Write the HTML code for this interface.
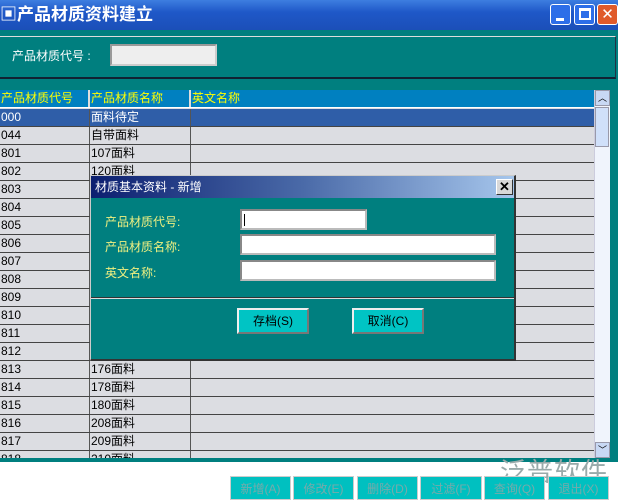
<!DOCTYPE html>
<html><head><meta charset="utf-8"><style>
*{margin:0;padding:0;box-sizing:border-box}
body{width:618px;height:500px;overflow:hidden;background:#fff;font-family:"Liberation Sans","Noto Sans CJK SC",sans-serif;font-size:12px;position:relative}
.abs{position:absolute}
.title{left:0;top:0;width:618px;height:30px;background:linear-gradient(#3d7ee0,#1f58c8 40%,#1b4fb8);color:#fff;font-size:17px;font-weight:bold;line-height:30px;padding-left:0}
.tb{top:4px;width:21px;height:21px;border:1px solid #fff;border-radius:3px;background:#2d6ee8}
.main{left:0;top:30px;width:618px;height:432px;background:#007f7f}
.grid{left:0;top:90px;width:594px;height:368px;background:#dcdde2;overflow:hidden}
.row{position:absolute;left:0;width:594px;height:18px;border-bottom:1px solid #444;font-size:12px;line-height:17px}
.c1,.c2,.c3{position:absolute;top:0;height:17px;padding-left:1px}
.c1{left:0;width:90px;border-right:1px solid #555}
.c2{left:90px;width:101px;border-right:1px solid #555}
.c3{left:191px;width:403px}
.hdr{background:#0080c0;color:#ff0;border-bottom:1px solid #fff}
.hdr .c1,.hdr .c2{border-right:2px solid #ddd}
.sel{background:#2f5ea8;color:#fff}
.dlg{left:90px;top:175px;width:426px;height:186px;background:#007f7f;border:1px solid #ccc;border-right:2px solid #333;border-bottom:2px solid #333}
.lbl{color:#f0f080;font-size:12px}
.inp{background:#fff;border:2px solid #bbb;border-top-color:#888;border-left-color:#888}
.btn{background:#00c4c4;border:2px solid #eee;border-right-color:#777;border-bottom-color:#777;text-align:center;font-size:12px}
.bb{top:476px;height:24px;background:#00c0c0;color:#7aa;text-align:center;line-height:24px;font-size:12px;border:1px solid #ccc}
</style></head><body>
<div class="abs title">▣产品材质资料建立</div>
<div class="abs tb" style="left:550px"><div class="abs" style="left:5px;top:13px;width:8px;height:3px;background:#fff"></div></div>
<div class="abs tb" style="left:574px"><div class="abs" style="left:4px;top:3px;width:12px;height:12px;border:2px solid #fff;border-top-width:3px"></div></div>
<div class="abs tb" style="left:597px;background:#e05a2a;color:#fff;font-size:15px;text-align:center;line-height:19px">✕</div>
<div class="abs main"></div>
<div class="abs" style="left:0;top:36px;width:616px;height:43px;border-top:1px solid #ddd;border-bottom:2px solid #123;border-right:1px solid #234"></div>
<div class="abs" style="left:12px;top:47px;color:#fff;font-size:12px">产品材质代号 :</div>
<div class="abs" style="left:110px;top:44px;width:107px;height:22px;background:#eee;border:2px solid #ccc;border-top-color:#999;border-left-color:#999"></div>
<div class="abs grid">
<div class="row hdr" style="top:0"><div class="c1">产品材质代号</div><div class="c2">产品材质名称</div><div class="c3">英文名称</div></div>
<div class="row sel" style="top:19px"><div class="c1">000</div><div class="c2">面料待定</div><div class="c3"></div></div>
<div class="row" style="top:37px"><div class="c1">044</div><div class="c2">自带面料</div><div class="c3"></div></div>
<div class="row" style="top:55px"><div class="c1">801</div><div class="c2">107面料</div><div class="c3"></div></div>
<div class="row" style="top:73px"><div class="c1">802</div><div class="c2">120面料</div><div class="c3"></div></div>
<div class="row" style="top:91px"><div class="c1">803</div><div class="c2"></div><div class="c3"></div></div>
<div class="row" style="top:109px"><div class="c1">804</div><div class="c2"></div><div class="c3"></div></div>
<div class="row" style="top:127px"><div class="c1">805</div><div class="c2"></div><div class="c3"></div></div>
<div class="row" style="top:145px"><div class="c1">806</div><div class="c2"></div><div class="c3"></div></div>
<div class="row" style="top:163px"><div class="c1">807</div><div class="c2"></div><div class="c3"></div></div>
<div class="row" style="top:181px"><div class="c1">808</div><div class="c2"></div><div class="c3"></div></div>
<div class="row" style="top:199px"><div class="c1">809</div><div class="c2"></div><div class="c3"></div></div>
<div class="row" style="top:217px"><div class="c1">810</div><div class="c2"></div><div class="c3"></div></div>
<div class="row" style="top:235px"><div class="c1">811</div><div class="c2"></div><div class="c3"></div></div>
<div class="row" style="top:253px"><div class="c1">812</div><div class="c2"></div><div class="c3"></div></div>
<div class="row" style="top:271px"><div class="c1">813</div><div class="c2">176面料</div><div class="c3"></div></div>
<div class="row" style="top:289px"><div class="c1">814</div><div class="c2">178面料</div><div class="c3"></div></div>
<div class="row" style="top:307px"><div class="c1">815</div><div class="c2">180面料</div><div class="c3"></div></div>
<div class="row" style="top:325px"><div class="c1">816</div><div class="c2">208面料</div><div class="c3"></div></div>
<div class="row" style="top:343px"><div class="c1">817</div><div class="c2">209面料</div><div class="c3"></div></div>
<div class="row" style="top:361px"><div class="c1">818</div><div class="c2">210面料</div><div class="c3"></div></div>
</div>
<div class="abs" style="left:594px;top:90px;width:16px;height:368px;background:#f0f4fc;border-left:1px solid #ccd"></div>
<div class="abs" style="left:595px;top:90px;width:15px;height:16px;background:#c8d8f4;border:1px solid #99a;font-size:9px;text-align:center;line-height:14px">︿</div>
<div class="abs" style="left:595px;top:107px;width:14px;height:40px;background:#d0e0fa;border:1px solid #99a"></div>
<div class="abs" style="left:595px;top:442px;width:15px;height:16px;background:#c8d8f4;border:1px solid #99a;font-size:9px;text-align:center;line-height:14px">﹀</div>
<div class="abs dlg">
<div class="abs" style="left:0;top:0;width:423px;height:22px;background:linear-gradient(90deg,#0c1f70,#4a6aa8 50%,#a6c6ec);color:#fff;font-size:12px;line-height:22px;padding-left:4px">材质基本资料 - 新增</div>
<div class="abs" style="left:405px;top:3px;width:17px;height:16px;background:#d8d8d8;border:1px solid #fff;border-right-color:#333;border-bottom-color:#333;text-align:center;line-height:13px;font-size:13px;font-weight:bold">✕</div>
<div class="abs lbl" style="left:14px;top:37px">产品材质代号:</div>
<div class="abs lbl" style="left:14px;top:62px">产品材质名称:</div>
<div class="abs lbl" style="left:14px;top:88px">英文名称:</div>
<div class="abs inp" style="left:149px;top:33px;width:127px;height:21px"><div class="abs" style="left:2px;top:3px;width:1px;height:12px;background:#000"></div></div>
<div class="abs inp" style="left:149px;top:58px;width:256px;height:21px"></div>
<div class="abs inp" style="left:149px;top:84px;width:256px;height:21px"></div>
<div class="abs" style="left:0;top:121px;width:423px;height:2px;background:#ddd;border-top:1px solid #333"></div>
<div class="abs btn" style="left:146px;top:132px;width:72px;height:26px;line-height:22px">存档(S)</div>
<div class="abs btn" style="left:261px;top:132px;width:72px;height:26px;line-height:22px">取消(C)</div>
</div>
<div class="abs" style="left:500px;top:452px;font-size:26px;color:#9aa;letter-spacing:1px">泛普软件</div>
<div class="abs bb" style="left:230px;width:61px">新增(A)</div>
<div class="abs bb" style="left:293px;width:61px">修改(E)</div>
<div class="abs bb" style="left:357px;width:61px">删除(D)</div>
<div class="abs bb" style="left:420px;width:62px">过滤(F)</div>
<div class="abs bb" style="left:484px;width:61px">查询(Q)</div>
<div class="abs bb" style="left:548px;width:61px">退出(X)</div>
</body></html>
